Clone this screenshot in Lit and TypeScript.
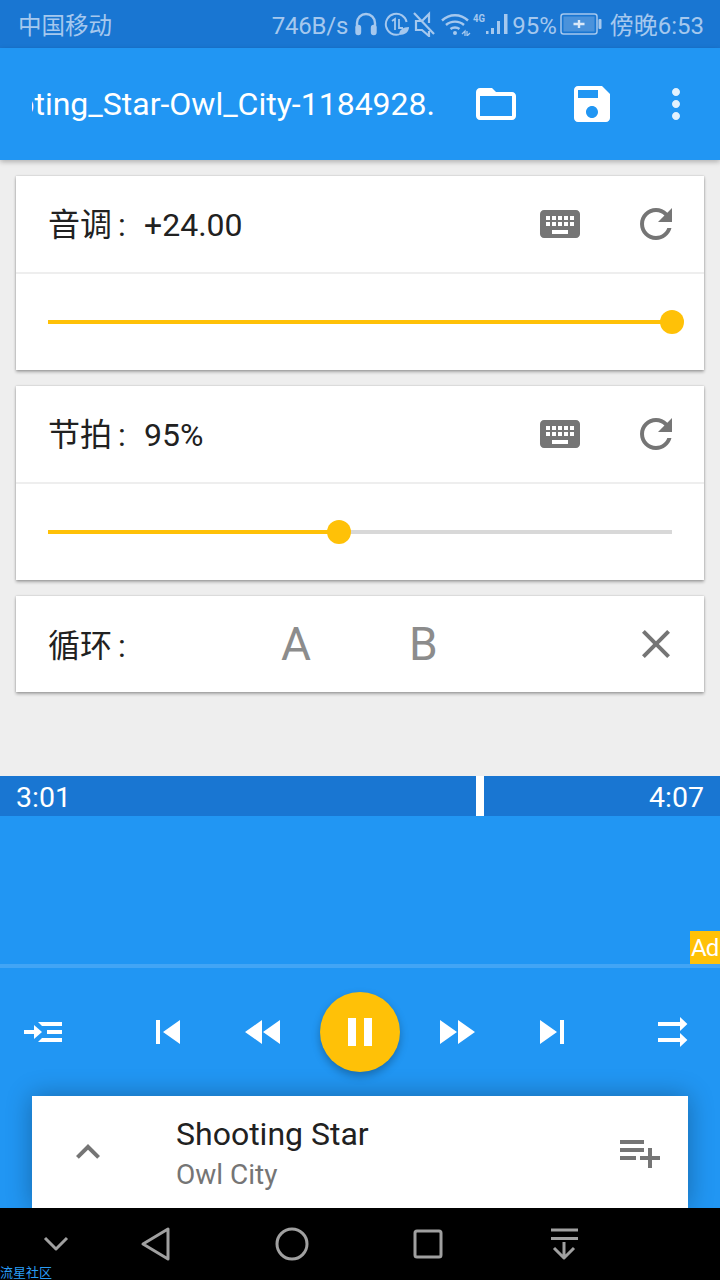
import { LitElement, html, css } from "lit";
import { customElement } from "lit/decorators.js";

const FOLDER = "M20 6h-8l-2-2H4c-1.1 0-1.99.9-1.99 2L2 18c0 1.1.9 2 2 2h16c1.1 0 2-.9 2-2V8c0-1.1-.9-2-2-2zm0 12H4V8h16v10z";
const SAVE = "M17 3H5c-1.11 0-2 .9-2 2v14c0 1.1.89 2 2 2h14c1.1 0 2-.9 2-2V7l-4-4zm-5 16c-1.66 0-3-1.34-3-3s1.34-3 3-3 3 1.34 3 3-1.34 3-3 3zm3-10H5V5h10v4z";
const MORE = "M12 8c1.1 0 2-.9 2-2s-.9-2-2-2-2 .9-2 2 .9 2 2 2zm0 2c-1.1 0-2 .9-2 2s.9 2 2 2 2-.9 2-2-.9-2-2-2zm0 6c-1.1 0-2 .9-2 2s.9 2 2 2 2-.9 2-2-.9-2-2-2z";
const KEYBOARD = "M20 5H4c-1.1 0-1.99.9-1.99 2L2 17c0 1.1.9 2 2 2h16c1.1 0 2-.9 2-2V7c0-1.1-.9-2-2-2zm-9 3h2v2h-2V8zm0 3h2v2h-2v-2zM8 8h2v2H8V8zm0 3h2v2H8v-2zm-1 2H5v-2h2v2zm0-3H5V8h2v2zm9 7H8v-2h8v2zm0-4h-2v-2h2v2zm0-3h-2V8h2v2zm3 3h-2v-2h2v2zm0-3h-2V8h2v2z";
const REFRESH = "M17.65 6.35C16.2 4.9 14.21 4 12 4c-4.42 0-7.99 3.58-7.99 8s3.57 8 7.99 8c3.73 0 6.84-2.55 7.73-6h-2.08c-.82 2.33-3.04 4-5.65 4-3.31 0-6-2.69-6-6s2.69-6 6-6c1.66 0 3.14.69 4.22 1.78L13 11h7V4l-2.35 2.35z";
const CLOSE = "M19 6.41L17.59 5 12 10.59 6.41 5 5 6.41 10.59 12 5 17.59 6.41 19 12 13.41 17.59 19 19 17.59 13.41 12z";
const PREV = "M6 6h2v12H6zm3.5 6l8.5 6V6z";
const REW = "M11 18V6l-8.5 6 8.5 6zm.5-6l8.5 6V6l-8.5 6z";
const FWD = "M4 18l8.5-6L4 6v12zm9-12v12l8.5-6L13 6z";
const NEXT = "M6 18l8.5-6L6 6v12zM16 6v12h2V6h-2z";
const UP = "M12 8l-6 6 1.41 1.41L12 10.83l4.59 4.58L18 14z";
const QUEUE = "M14 10H2v2h12v-2zm0-4H2v2h12V6zm4 8v-4h-2v4h-4v2h4v4h2v-4h4v-2h-4zM2 16h8v-2H2v2z";
// Queue-insert glyph: arrow running into three list lines
const INSERT = "M2 11h5V8.500L11 12l-4 3.500V13H2zM9 7h12v2H11zM13.500 11H21v2h-7.500zM11 15h10v2H9z";
// Play-order glyph: two stacked arrows
const ORDER = "M3 7h11V4.500L17.700 8 14 11.500V9H3zM3 15h11v-2.500L17.700 16 14 19.500V17H3z";

const icon = (d: string) => html`<svg class="ico" viewBox="0 0 24 24"><path d=${d}></path></svg>`;

@customElement("app-root")
export class AppRoot extends LitElement {
  static styles = css`
    :host {
      display: flex;
      flex-direction: column;
      width: 720px;
      height: 1280px;
      background: #eeeeee;
      font-family: Roboto, "Noto Sans CJK SC", sans-serif;
      color: #212121;
      overflow: hidden;
    }
    .ico { width: 48px; height: 48px; display: block; flex: none; fill: currentColor; }

    .status {
      height: 48px; flex: none; background: #1976d2; color: #a5c8ee;
      display: flex; align-items: center; padding: 0 16px 0 18px;
      font-size: 24px; white-space: nowrap;
    }
    .status span { display: block; height: 34px; line-height: 34px; overflow: visible; }
    .status .carrier { flex: 1; font-size: 23.500px; margin-top: 3px; }
    .status .speed { letter-spacing: -0.2px; margin-top: 4px; }
    .status svg { display: block; flex: none; fill: none; stroke: currentColor; }
    .status .pct { margin-left: 2px; margin-top: 4px; }
    .status .clock { margin-left: 8px; margin-top: 3px; }
    .s-head { width: 24px; height: 24px; margin-left: 6px; }
    .s-eco { width: 26px; height: 24px; margin-left: 6px; }
    .s-mute { width: 26px; height: 26px; margin-left: 1px; }
    .s-wifi { width: 30px; height: 24px; margin-left: 4px; }
    .s-sig { width: 38px; height: 30px; margin-left: 1px; }
    .s-batt { width: 42px; height: 22px; margin-left: 3px; }

    .toolbar {
      height: 112px; flex: none; background: #2196f3; color: #fff;
      display: flex; align-items: center; padding-left: 32px;
      box-shadow: 0 2px 5px rgba(0, 0, 0, 0.26); position: relative;
    }
    .title-clip {
      width: 403px; overflow: hidden; display: flex; justify-content: flex-end;
      font-size: 32px; white-space: nowrap; flex: none;
    }
    .toolbar .folder { margin-left: 37px; }
    .toolbar .save { margin-left: 48px; }
    .toolbar .more { margin-left: 36px; opacity: 0.87; }

    .panels {
      flex: 1; display: flex; flex-direction: column; gap: 16px;
      padding: 16px 16px 0;
    }
    .card {
      background: #fff;
      box-shadow: 0 2px 3px rgba(0, 0, 0, 0.3), 0 0 2px rgba(0, 0, 0, 0.2);
    }
    .row {
      height: 96px; display: flex; align-items: center; padding: 0 24px 0 32px;
      font-size: 32px;
    }
    .row .label { flex: 1; display: flex; align-items: baseline; padding-bottom: 4px; }
    .row .colon { width: 32px; text-align: left; padding-left: 6px; box-sizing: border-box; }
    .row .kbd { color: #757575; margin-right: 48px; }
    .row .reset { color: #757575; }
    .card .sep { height: 2px; background: #eeeeee; }
    .slider { height: 96px; padding: 0 32px; display: flex; align-items: center; }
    .track { flex: 1; height: 4px; background: #d8d8d8; position: relative; }
    .fill { height: 100%; background: #ffc107; }
    .thumb {
      position: absolute; top: -10px; width: 24px; height: 24px; margin-left: -12px;
      border-radius: 50%; background: #ffc107;
    }
    .loop .name { width: 233px; display: flex; align-items: baseline; flex: none; padding-bottom: 2px; }
    .loop .ab { font-size: 46px; color: #8c8c8c; width: 28px; text-align: center; flex: none; }
    .loop .ab.a { margin-right: 100px; }
    .loop .spacer { flex: 1; }
    .loop .x { color: #757575; }

    .times {
      height: 40px; flex: none; background: #1976d2; color: #fff;
      display: flex; justify-content: space-between; align-items: center;
      padding: 2px 16px 0; box-sizing: border-box; font-size: 28.500px; position: relative;
    }
    .playhead { position: absolute; left: 476px; top: 0; bottom: 0; width: 8px; background: #fff; }

    .player {
      height: 392px; flex: none; background: #2196f3; display: flex;
      flex-direction: column; position: relative; overflow: hidden;
    }
    .wave { height: 148px; flex: none; border-bottom: 4px solid #42a5f5; position: relative; }
    .ad {
      position: absolute; right: 0; bottom: 0; width: 30px; height: 33px; padding-left: 1px;
      box-sizing: border-box; background: #ffc107; color: #fff; font-size: 24px; line-height: 35px;
      letter-spacing: -1px; overflow: hidden; white-space: nowrap;
    }
    .controls {
      height: 128px; flex: none; display: flex; align-items: center;
      color: #fff; position: relative;
    }
    .controls .c-insert { margin-left: 20px; }
    .controls .c-prev { margin-left: 76px; }
    .controls .c-rew { margin-left: 48px; }
    .controls .c-fab {
      margin-left: 32px; width: 80px; height: 80px; border-radius: 50%;
      background: #ffc107; flex: none; display: flex; align-items: center;
      justify-content: center; gap: 8px;
      box-shadow: 0 4px 8px rgba(0, 0, 0, 0.28);
    }
    .c-fab i { display: block; width: 8px; height: 28px; background: #fff; }
    .controls .c-fwd { margin-left: 32px; }
    .controls .c-next { margin-left: 48px; }
    .controls .c-order { margin-left: 76px; }

    .mini {
      margin: 0 32px; height: 112px; flex: none; background: #fff;
      display: flex; align-items: center;
      box-shadow: 0 0 24px rgba(0, 0, 0, 0.3);
    }
    .mini .up { color: #757575; margin-left: 32px; }
    .mini .meta { flex: 1; margin-left: 64px; padding-top: 4px; display: flex; flex-direction: column; }
    .mini .song { font-size: 32px; line-height: 38px; }
    .mini .artist { font-size: 28px; line-height: 38px; color: #757575; margin-top: 3px; }
    .mini .add { color: #757575; margin-right: 24px; }

    .nav {
      height: 72px; flex: none; background: #000; color: #a0a0a0;
      display: flex; align-items: center; position: relative;
    }
    .nav svg { display: block; flex: none; fill: none; stroke: currentColor; stroke-width: 3; stroke-linejoin: round; }
    .nav .n-hide { width: 28px; height: 16px; margin-left: 42px; }
    .nav .n-back { width: 32px; height: 36px; margin-left: 70px; }
    .nav .n-home { width: 36px; height: 36px; margin-left: 102px; }
    .nav .n-rec { width: 32px; height: 32px; margin-left: 102px; }
    .nav .n-pull { width: 32px; height: 36px; margin-left: 104px; }
    .mark {
      position: absolute; left: 0; bottom: 0; font-size: 13px; line-height: 14px;
      color: #2a9df4; white-space: nowrap;
    }
  `;

  private slider(pct: number) {
    return html`<div class="slider">
      <div class="track">
        <div class="fill" style="width:${pct}%"></div>
        <div class="thumb" style="left:${pct}%"></div>
      </div>
    </div>`;
  }

  private tune(label: string, value: string, pct: number) {
    return html`<div class="card">
      <div class="row">
        <div class="label"><span>${label}</span><span class="colon">:</span><span>${value}</span></div>
        <span class="kbd">${icon(KEYBOARD)}</span>
        <span class="reset">${icon(REFRESH)}</span>
      </div>
      <div class="sep"></div>
      ${this.slider(pct)}
    </div>`;
  }

  render() {
    return html`
      <div class="status">
        <span class="carrier">中国移动</span>
        <span class="speed">746B/s</span>
        <svg class="s-head" viewBox="0 0 24 24" stroke-width="2.400">
          <path d="M3 16V11a9 9 0 0 1 18 0v5"></path>
          <rect x="2.500" y="14" width="3.500" height="8" rx="1.700" fill="currentColor"></rect>
          <rect x="18" y="14" width="3.500" height="8" rx="1.700" fill="currentColor"></rect>
        </svg>
        <svg class="s-eco" viewBox="0 0 26 24" stroke-width="2">
          <path d="M15 22.400A10.500 10.500 0 1 1 22.600 10"></path>
          <path d="M8 9l3-2v11M15 7v9h4" stroke-width="1.800"></path>
          <path d="M15 23c0-5 4-8 10-8 0 5-4 8-10 8z" fill="currentColor" stroke="none"></path>
        </svg>
        <svg class="s-mute" viewBox="0 0 26 26" stroke-width="2.200">
          <path d="M18 12V3l-7 7H5v9h6l7 6v-5"></path>
          <path d="M3 2l20 21"></path>
        </svg>
        <svg class="s-wifi" viewBox="0 0 30 24" stroke-width="2.400">
          <path d="M1 8.500c7.500-7 18.500-7 26 0M5 13c5-4.500 13-4.500 18 0M9.500 17c2.500-2 6.500-2 9 0"></path>
          <circle cx="14" cy="21" r="2" fill="currentColor" stroke="none"></circle>
          <path d="M21 22l3-3v5M26 19v5l3-3" stroke-width="1.300"></path>
        </svg>
        <svg class="s-sig" viewBox="0 0 38 30">
          <text x="1" y="13" font-size="11" font-weight="700" fill="currentColor" stroke="none" font-family="Roboto" textLength="12" lengthAdjust="spacingAndGlyphs">4G</text>
          <path d="M14 22h2.500v3H14zM19 19h3v6h-3zM25 12h3v13h-3zM32 5h3.500v20H32z" fill="currentColor" stroke="none"></path>
        </svg>
        <span class="pct">95%</span>
        <svg class="s-batt" viewBox="0 0 42 22" stroke-width="1.500">
          <rect x="1" y="1" width="36" height="20" rx="2.500"></rect>
          <rect x="3.500" y="3.500" width="31" height="15" fill="currentColor" fill-opacity="0.350" stroke="none"></rect>
          <path d="M13.500 11h11M19 7v8" stroke="#dbe9f8" stroke-width="2.400"></path>
          <rect x="38.500" y="6" width="3" height="10" rx="1" fill="currentColor" stroke="none"></rect>
        </svg>
        <span class="clock">傍晚6:53</span>
      </div>

      <div class="toolbar">
        <div class="title-clip"><span>Shooting_Star-Owl_City-1184928.</span></div>
        <span class="folder">${icon(FOLDER)}</span>
        <span class="save">${icon(SAVE)}</span>
        <span class="more">${icon(MORE)}</span>
      </div>

      <div class="panels">
        ${this.tune("音调", "+24.00", 100)}
        ${this.tune("节拍", "95%", 46.700)}
        <div class="card">
          <div class="row loop">
            <div class="name"><span>循环</span><span class="colon">:</span></div>
            <span class="ab a">A</span>
            <span class="ab">B</span>
            <span class="spacer"></span>
            <span class="x">${icon(CLOSE)}</span>
          </div>
        </div>
      </div>

      <div class="times">
        <span>3:01</span>
        <span>4:07</span>
        <div class="playhead"></div>
      </div>

      <div class="player">
        <div class="wave"><div class="ad">Ad</div></div>
        <div class="controls">
          <span class="c-insert">${icon(INSERT)}</span>
          <span class="c-prev">${icon(PREV)}</span>
          <span class="c-rew">${icon(REW)}</span>
          <div class="c-fab"><i></i><i></i></div>
          <span class="c-fwd">${icon(FWD)}</span>
          <span class="c-next">${icon(NEXT)}</span>
          <span class="c-order">${icon(ORDER)}</span>
        </div>
        <div class="mini">
          <span class="up">${icon(UP)}</span>
          <div class="meta">
            <span class="song">Shooting Star</span>
            <span class="artist">Owl City</span>
          </div>
          <span class="add">${icon(QUEUE)}</span>
        </div>
      </div>

      <div class="nav">
        <svg class="n-hide" viewBox="0 0 28 16"><path d="M3 2l11 11L25 2"></path></svg>
        <svg class="n-back" viewBox="0 0 32 36"><path d="M3 18L28 3v30z"></path></svg>
        <svg class="n-home" viewBox="0 0 36 36"><circle cx="18" cy="18" r="15"></circle></svg>
        <svg class="n-rec" viewBox="0 0 32 32"><rect x="3" y="3" width="26" height="26" rx="2"></rect></svg>
        <svg class="n-pull" viewBox="0 0 32 36"><path d="M3 4h27M3 12.500h27M16 16v16M6 22l10 10 10-10"></path></svg>
        <span class="mark">流星社区</span>
      </div>
    `;
  }
}
